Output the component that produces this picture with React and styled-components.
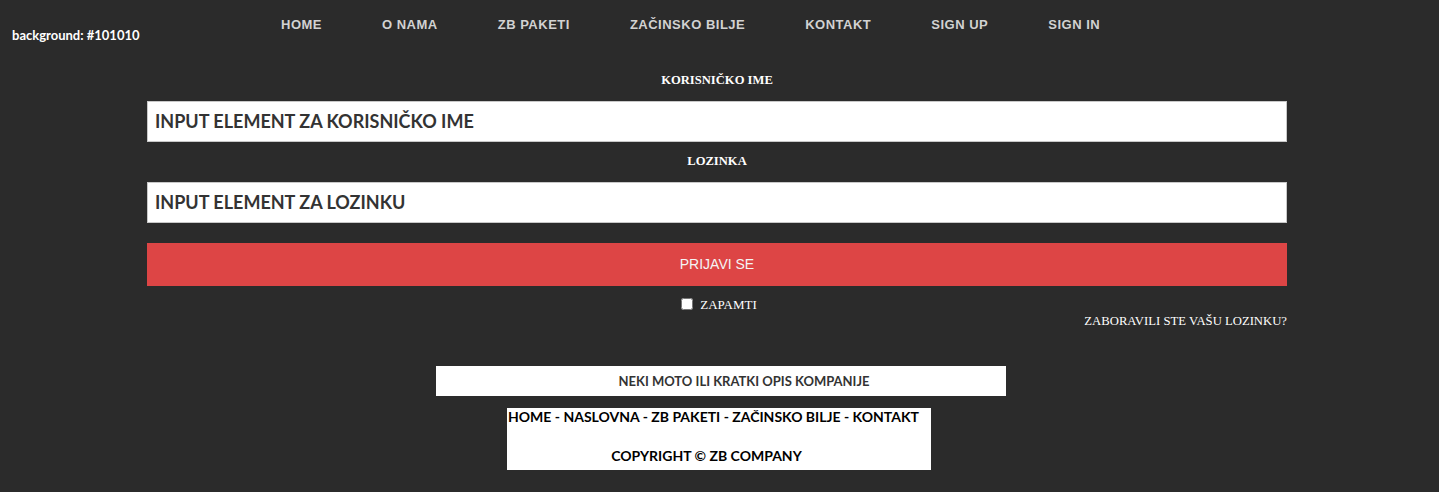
import React from "react";
import styled, { createGlobalStyle } from "styled-components";

const GlobalStyle = createGlobalStyle`
  html, body {
    margin: 0;
    padding: 0;
    background: #2b2b2b;
  }
  body {
    font-family: "Liberation Sans", Arial, sans-serif;
  }
`;

const Page = styled.div`
  width: 1439px;
  min-height: 492px;
  background: #2b2b2b;
`;

const Header = styled.header`
  height: 61px;
  display: flex;
  align-items: flex-start;
`;

const BgNote = styled.div`
  width: 281px;
  padding: 27px 0 0 12px;
  box-sizing: border-box;
  font-family: Lato, "Open Sans", sans-serif;
  font-weight: 700;
  font-size: 13px;
  color: #fff;
`;

const Nav = styled.nav`
  display: flex;
  gap: 60px;
  padding-top: 17px;
`;

const NavLink = styled.a`
  font-family: "Liberation Sans", Arial, sans-serif;
  font-weight: 700;
  font-size: 13px;
  letter-spacing: 0.5px;
  color: #d2d2d2;
  text-decoration: none;
  line-height: 16px;
`;

const Form = styled.form`
  width: 1140px;
  margin-left: 147px;
  display: flex;
  flex-direction: column;
`;

const Label = styled.label`
  font-family: "Liberation Serif", "Times New Roman", serif;
  font-weight: 700;
  font-size: 12.6px;
  line-height: 14px;
  color: #fff;
  text-align: center;
  margin: 12px 0 14px;
`;

const Input = styled.div`
  height: 41px;
  box-sizing: border-box;
  background: #fff;
  border: 1px solid #c8c8c8;
  padding: 0 7px 2px;
  display: flex;
  align-items: center;
  font-family: Lato, "Open Sans", sans-serif;
  font-weight: 700;
  font-size: 18px;
  color: #333;
`;

const Button = styled.button`
  margin-top: 20px;
  height: 43px;
  border: none;
  background: #dd4545;
  color: #f4f4f4;
  font-family: "Liberation Sans", Arial, sans-serif;
  font-size: 14px;
  padding-bottom: 2px;
  cursor: pointer;
`;

const RememberRow = styled.div`
  margin-top: 11px;
  display: flex;
  justify-content: center;
  align-items: center;
  height: 16px;
  padding-left: 4px;
`;

const Check = styled.input`
  width: 12px;
  height: 12px;
  margin: 0 7px 2px 0;
`;

const SerifText = styled.span`
  font-family: "Liberation Serif", "Times New Roman", serif;
  font-size: ${(p) => p.$size || 13}px;
  color: #fff;
  line-height: 16px;
`;

const ForgotRow = styled.div`
  display: flex;
  justify-content: flex-end;
  margin-top: 0;
`;

const Footer = styled.footer`
  display: flex;
  flex-direction: column;
  align-items: flex-start;
  margin-top: 37px;
`;

const Moto = styled.div`
  width: 570px;
  height: 30px;
  margin-left: 436px;
  background: #fff;
  display: flex;
  align-items: center;
  justify-content: center;
  padding-left: 46px;
  box-sizing: border-box;
  font-family: Lato, "Open Sans", sans-serif;
  font-weight: 700;
  font-size: 13px;
  color: #333;
`;

const Bottom = styled.div`
  width: 424px;
  height: 62px;
  margin: 12px 0 0 507px;
  background: #fff;
  display: flex;
  flex-direction: column;
  justify-content: space-between;
  font-family: Lato, "Open Sans", sans-serif;
  font-weight: 700;
  font-size: 14px;
  color: #000;
  padding: 0 0 6px 1px;
  box-sizing: border-box;
`;

const Copy = styled.div`
  text-align: center;
  padding-right: 26px;
`;

const links = ["HOME", "O NAMA", "ZB PAKETI", "ZAČINSKO BILJE", "KONTAKT", "SIGN UP", "SIGN IN"];

export default function App() {
  return (
    <Page>
      <GlobalStyle />
      <Header>
        <BgNote>background: #101010</BgNote>
        <Nav>
          {links.map((l) => (
            <NavLink key={l} href="#">{l}</NavLink>
          ))}
        </Nav>
      </Header>
      <Form onSubmit={(e) => e.preventDefault()}>
        <Label>KORISNIČKO IME</Label>
        <Input>INPUT ELEMENT ZA KORISNIČKO IME</Input>
        <Label>LOZINKA</Label>
        <Input>INPUT ELEMENT ZA LOZINKU</Input>
        <Button type="submit">PRIJAVI SE</Button>
        <RememberRow>
          <Check type="checkbox" />
          <SerifText>ZAPAMTI</SerifText>
        </RememberRow>
        <ForgotRow>
          <SerifText $size={12.7}>ZABORAVILI STE VAŠU LOZINKU?</SerifText>
        </ForgotRow>
      </Form>
      <Footer>
        <Moto>NEKI MOTO ILI KRATKI OPIS KOMPANIJE</Moto>
        <Bottom>
          <div>HOME - NASLOVNA - ZB PAKETI - ZAČINSKO BILJE - KONTAKT</div>
          <Copy>COPYRIGHT © ZB COMPANY</Copy>
        </Bottom>
      </Footer>
    </Page>
  );
}
